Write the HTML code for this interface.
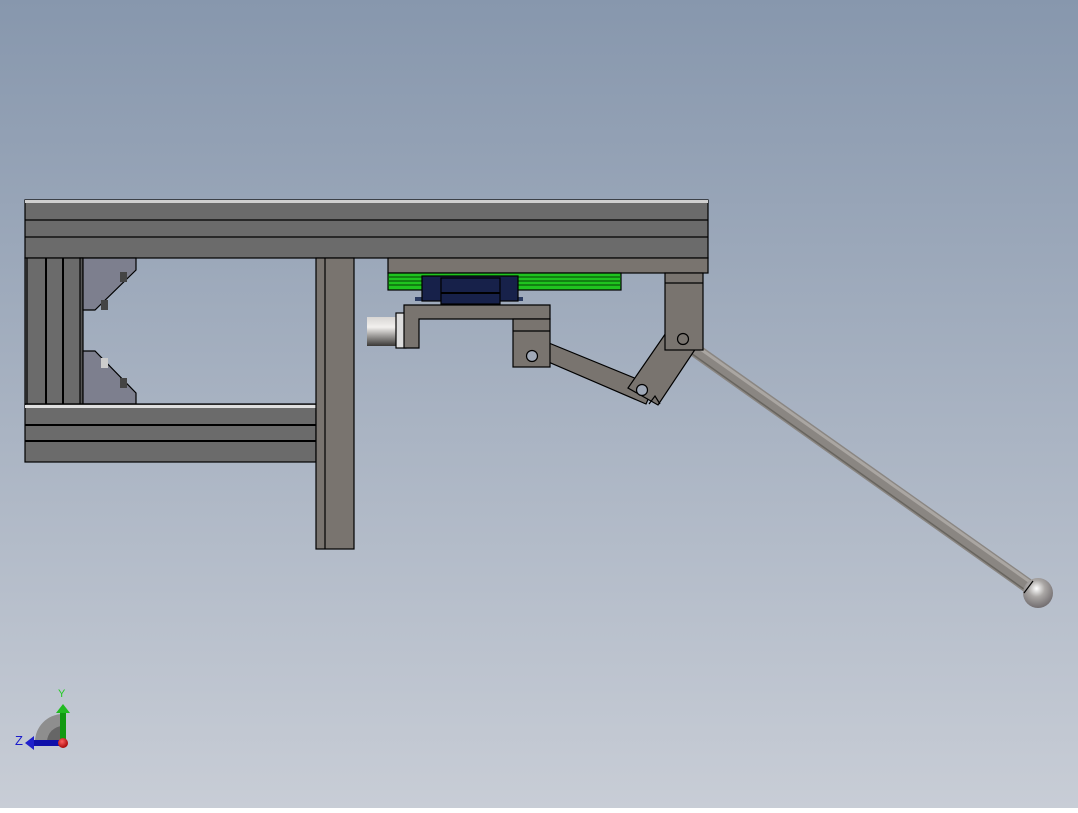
<!DOCTYPE html>
<html><head><style>html,body{margin:0;padding:0}body{width:1078px;height:808px;overflow:hidden}</style></head>
<body>
<svg width="1078" height="808" xmlns="http://www.w3.org/2000/svg">
<defs>
<linearGradient id="bg" x1="0" y1="0" x2="0" y2="1"><stop offset="0" stop-color="#8797ad"/><stop offset="1" stop-color="#c8cdd6"/></linearGradient>
<linearGradient id="cyl" x1="0" y1="0" x2="0" y2="1"><stop offset="0" stop-color="#d8d6d4"/><stop offset=".35" stop-color="#f2f0ee"/><stop offset="1" stop-color="#3a3836"/></linearGradient>
<radialGradient id="ball" cx=".45" cy=".35" r=".7"><stop offset="0" stop-color="#ffffff"/><stop offset=".4" stop-color="#aaa7a5"/><stop offset="1" stop-color="#6a6568"/></radialGradient>
<radialGradient id="rb" cx=".4" cy=".35" r=".7"><stop offset="0" stop-color="#ff6060"/><stop offset="1" stop-color="#a00000"/></radialGradient>
</defs>
<rect width="1078" height="808" fill="url(#bg)"/>
<g stroke="#000" stroke-width="1.2">
<rect x="25" y="200" width="683" height="58" fill="#6b6b6b"/>
<rect x="25" y="200" width="683" height="3" fill="#d0d0d0" stroke="none"/>
<line x1="25" y1="220" x2="708" y2="220"/><line x1="25" y1="237" x2="708" y2="237"/>
<rect x="25" y="258" width="57" height="146" fill="#6b6b6b"/>
<line x1="27" y1="258" x2="27" y2="404"/><line x1="46" y1="258" x2="46" y2="404" stroke-width="2"/><line x1="63" y1="258" x2="63" y2="404" stroke-width="2"/>
<rect x="80" y="258" width="3" height="146" fill="#555"/>
<path d="M83 258H136V270L95 310H83Z" fill="#7d7f8e"/>
<path d="M83 351H95L136 393V404H83Z" fill="#7d7f8e"/>
<rect x="120" y="272" width="7" height="10" fill="#444" stroke="none"/><rect x="101" y="300" width="7" height="10" fill="#444" stroke="none"/>
<rect x="101" y="358" width="7" height="10" fill="#ccc" stroke="none"/><rect x="120" y="378" width="7" height="10" fill="#444" stroke="none"/>
<rect x="25" y="404" width="291" height="58" fill="#6b6b6b"/>
<rect x="25" y="405" width="291" height="3" fill="#e0e0e0" stroke="none"/>
<line x1="25" y1="425" x2="316" y2="425" stroke-width="2"/><line x1="25" y1="441" x2="316" y2="441" stroke-width="2"/>
<rect x="316" y="258" width="38" height="291" fill="#79746f"/>
<line x1="325" y1="258" x2="325" y2="549"/>
<rect x="388" y="258" width="320" height="15" fill="#79746f"/>
<rect x="388" y="273" width="233" height="17" fill="#1fc41f"/>
<line x1="388" y1="277" x2="621" y2="277" stroke="#0a5a0a"/><line x1="388" y1="281" x2="621" y2="281" stroke="#0a5a0a"/><line x1="388" y1="285" x2="621" y2="285" stroke="#0a5a0a"/>
<rect x="415" y="297" width="108" height="4" fill="#2a3a60" stroke="none"/>
<rect x="422" y="276" width="96" height="25" fill="#17214a"/>
<rect x="441" y="278" width="59" height="26" fill="#17214a"/>
<line x1="441" y1="293" x2="500" y2="293" stroke-width="2"/>
<rect x="367" y="317" width="30" height="29" fill="url(#cyl)" stroke="none"/>
<rect x="396" y="313" width="10" height="35" fill="#ddd"/>
<path d="M404 305H550V319H419V348H404Z" fill="#79746f"/>
<path d="M516 348L522 332L654 386L646 404Z" fill="#79746f"/>
<rect x="513" y="319" width="37" height="48" fill="#79746f"/>
<line x1="513" y1="331" x2="550" y2="331"/>
<circle cx="532" cy="356" r="5.5" fill="#a0a9b8"/>
<path d="M693 340L1035 582L1027 594L687 353Z" fill="#8a8682" stroke="none"/>
<line x1="692" y1="343" x2="1033" y2="584" stroke="#aaa6a2" stroke-width="3"/>
<line x1="688" y1="351" x2="1028" y2="592" stroke="#68655f" stroke-width="1.5"/>
<circle cx="1038" cy="593" r="15" fill="url(#ball)" stroke="none"/>
<line x1="1033" y1="581" x2="1024" y2="593"/>
<path d="M628 388L668 330L700 342L658 405Z" fill="#79746f"/>
<path d="M649 404L655 396L660 404" fill="none"/>
<circle cx="642" cy="390" r="5.5" fill="#a0a9b8"/>
<rect x="665" y="273" width="38" height="77" fill="#79746f"/>
<line x1="665" y1="283" x2="703" y2="283"/>
<circle cx="683" cy="339" r="5.5" fill="none"/>
</g>
<path d="M35 742A28 28 0 0 1 63 714V742Z" fill="#8e8e8e"/>
<path d="M47 742A16 16 0 0 1 63 726V742Z" fill="#666"/>
<rect x="60" y="712" width="6" height="30" fill="#119911"/>
<path d="M56 713L63 704L70 713Z" fill="#22bb22"/>
<rect x="33" y="740" width="28" height="6" fill="#1010aa"/>
<path d="M34 736L25 743L34 750Z" fill="#2020cc"/>
<circle cx="63" cy="743" r="5" fill="url(#rb)"/>
<text x="58" y="697" font-family="Liberation Sans, sans-serif" font-size="11" fill="#22cc22">Y</text>
<text x="15" y="745" font-family="Liberation Sans, sans-serif" font-size="13" fill="#1a1acc">Z</text>
</svg>
</body></html>
